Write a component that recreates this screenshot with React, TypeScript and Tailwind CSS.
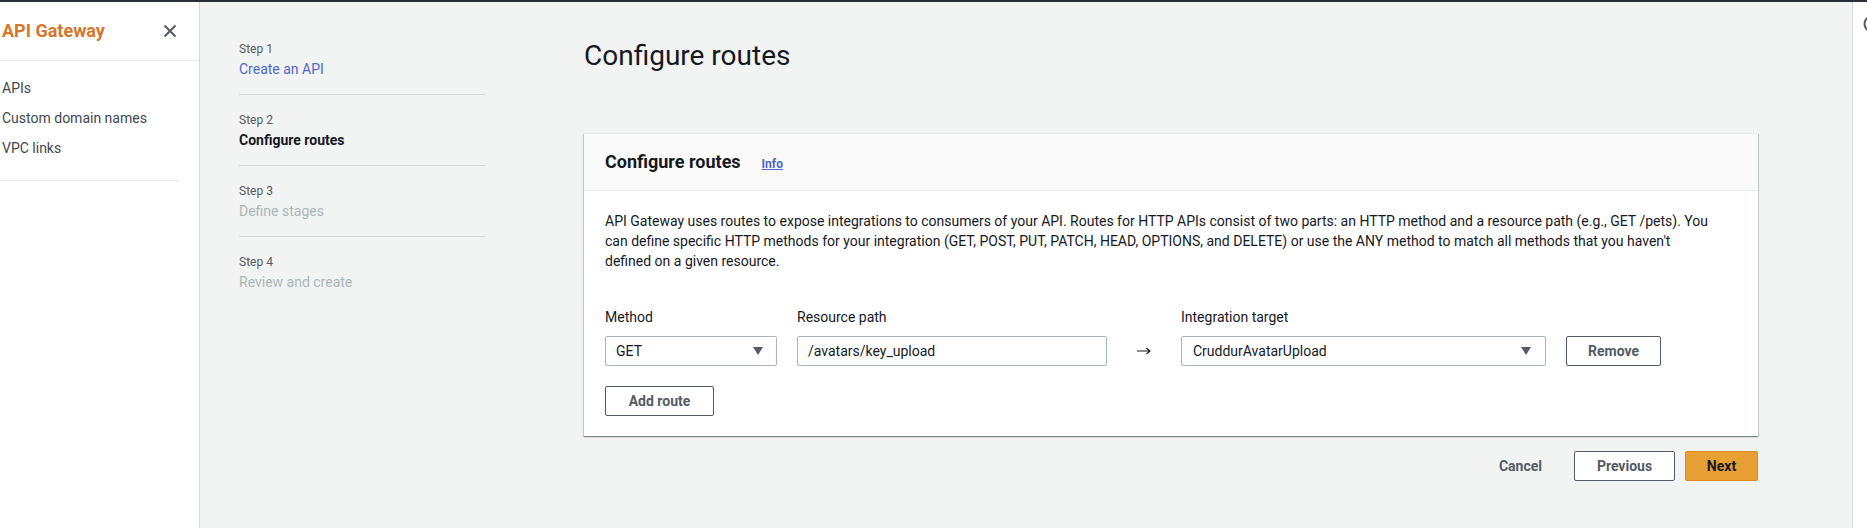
import { useState } from "react";

const steps = [
  { label: "Step 1", title: "Create an API", state: "done" },
  { label: "Step 2", title: "Configure routes", state: "current" },
  { label: "Step 3", title: "Define stages", state: "todo" },
  { label: "Step 4", title: "Review and create", state: "todo" },
];

function Caret() {
  return (
    <svg width="12" height="10" viewBox="0 0 12 10" className="shrink-0">
      <path d="M1 1h10L6 9z" fill="#545b64" />
    </svg>
  );
}

export default function App() {
  const [path, setPath] = useState("/avatars/key_upload");

  return (
    <div
      className="w-full h-[528px] flex flex-col bg-[#f2f3f3] text-[#16191f] overflow-hidden"
      style={{ fontFamily: "Roboto, 'Liberation Sans', Arial, sans-serif" }}
    >
      <div className="h-[2px] bg-[#2a2f37] shrink-0" />
      <div className="flex flex-1 min-h-0">
        {/* side navigation */}
        <aside className="w-[200px] shrink-0 bg-white border-r border-[#d5dbdb]">
          <div className="h-[59px] flex items-center justify-between pl-[2px] pr-[22px] border-b border-[#eaeded]">
            <span className="text-[18px] font-bold text-[#d5772c] leading-[22px]">API Gateway</span>
            <svg width="14" height="14" viewBox="0 0 14 14">
              <path d="M1.5 1.5l11 11M12.5 1.5l-11 11" stroke="#545b64" strokeWidth="2" />
            </svg>
          </div>
          <nav className="pt-[12px] pb-[17px] mr-[20px] border-b border-[#eaeded] text-[14px] text-[#414750]">
            <a className="block pl-[2px] leading-[30px]">APIs</a>
            <a className="block pl-[2px] leading-[30px]">Custom domain names</a>
            <a className="block pl-[2px] leading-[30px]">VPC links</a>
          </nav>
        </aside>

        {/* main */}
        <main className="flex-1 flex min-w-0">
          <ol className="ml-[39px] w-[246px] shrink-0 pt-[22px]">
            {steps.map((s, i) => (
              <li
                key={s.label}
                className={`pt-[17px] pb-[15px] ${i < steps.length - 1 ? "border-b border-[#d5dbdb]" : ""}`}
              >
                <div className="text-[12px] leading-[16px] text-[#545b64]">{s.label}</div>
                <div
                  className={`mt-[2px] text-[14px] leading-[20px] ${
                    s.state === "done"
                      ? "text-[#4e67c9]"
                      : s.state === "current"
                      ? "font-bold text-[#16191f]"
                      : "text-[#aab7b8]"
                  }`}
                >
                  {s.title}
                </div>
              </li>
            ))}
          </ol>

          <div className="ml-[99px] w-[1174px] shrink-0">
            <h1 className="pt-[36px] text-[28px] leading-[36px] font-normal">Configure routes</h1>

            <section className="mt-[59px] bg-white border-t border-[#eaeded] shadow-[0_1px_1px_0_rgba(0,28,36,0.3),1px_1px_1px_0_rgba(0,28,36,0.15),-1px_1px_1px_0_rgba(0,28,36,0.15)]">
              <div className="bg-[#fafafa] border-b border-[#eaeded] px-[21px] py-[17px] flex items-baseline">
                <h2 className="text-[18px] leading-[22px] font-bold">Configure routes</h2>
                <a className="ml-[21px] text-[12px] font-bold underline text-[#4e67c9]">Info</a>
              </div>
              <div className="px-[21px] pt-[20px] pb-[20px]">
                <p className="text-[14px] leading-[20px]">
                  API Gateway uses routes to expose integrations to consumers of your API. Routes for HTTP APIs consist of two
                  parts: an HTTP method and a resource path (e.g., GET /pets). You
                  <br />
                  can define specific HTTP methods for your integration (GET, POST, PUT, PATCH, HEAD, OPTIONS, and DELETE) or use
                  the ANY method to match all methods that you haven't
                  <br />
                  defined on a given resource.
                </p>

                <div className="mt-[36px] flex items-end text-[14px]">
                  <div className="w-[172px]">
                    <div className="leading-[20px] mb-[9px]">Method</div>
                    <div className="h-[30px] border border-[#aab7b8] rounded-[2px] pl-[10px] pr-[12px] flex items-center justify-between">
                      <span>GET</span>
                      <Caret />
                    </div>
                  </div>
                  <div className="w-[310px] ml-[20px]">
                    <div className="leading-[20px] mb-[9px]">Resource path</div>
                    <input
                      value={path}
                      onChange={(e) => setPath(e.target.value)}
                      className="w-full h-[30px] border border-[#aab7b8] rounded-[2px] px-[10px] outline-none"
                    />
                  </div>
                  <div className="w-[74px] h-[30px] flex items-center justify-center">
                    <svg width="14" height="8" viewBox="0 0 14 8">
                      <path d="M0 4h13M9.5 1l3.5 3-3.5 3" fill="none" stroke="#16191f" strokeWidth="1.1" />
                    </svg>
                  </div>
                  <div className="w-[365px]">
                    <div className="leading-[20px] mb-[9px]">Integration target</div>
                    <div className="h-[30px] border border-[#aab7b8] rounded-[2px] pl-[11px] pr-[13px] flex items-center justify-between">
                      <span>CruddurAvatarUpload</span>
                      <Caret />
                    </div>
                  </div>
                  <button className="ml-[20px] w-[95px] h-[30px] border border-[#545b64] rounded-[2px] font-bold text-[#545b64] bg-white">
                    Remove
                  </button>
                </div>

                <button className="mt-[20px] w-[109px] h-[30px] border border-[#545b64] rounded-[2px] font-bold text-[14px] text-[#545b64] bg-white">
                  Add route
                </button>
              </div>
            </section>

            <div className="mt-[15px] flex justify-end items-center text-[14px] font-bold">
              <button className="mr-[32px] text-[#545b64]">Cancel</button>
              <button className="w-[101px] h-[30px] border border-[#545b64] rounded-[2px] bg-white text-[#545b64]">
                Previous
              </button>
              <button className="ml-[10px] w-[73px] h-[30px] border border-[#dc8a22] rounded-[2px] bg-[#e8a034] text-[#16191f]">
                Next
              </button>
            </div>
          </div>
        </main>

        {/* collapsed help panel */}
        <div className="w-[15px] shrink-0 bg-white border-l border-[#d5dbdb] overflow-hidden pl-[10px] pt-[13px]">
          <svg width="18" height="18" viewBox="0 0 18 18" className="block">
            <circle cx="9" cy="9" r="7.5" fill="none" stroke="#545b64" strokeWidth="2" />
          </svg>
        </div>
      </div>
    </div>
  );
}
